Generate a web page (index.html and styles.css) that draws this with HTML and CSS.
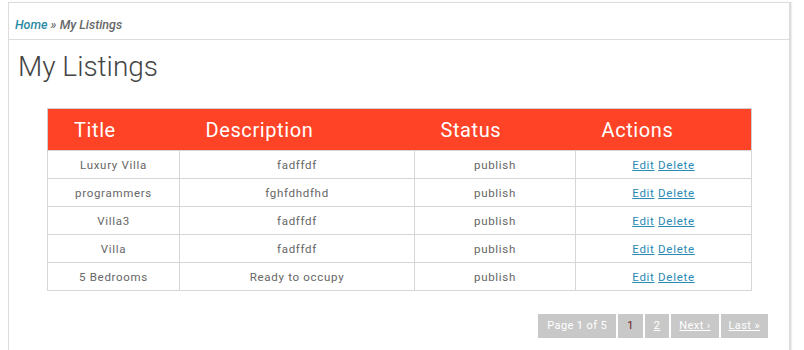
FILE: index.html
```html
<!DOCTYPE html>
<html>
<head>
<meta charset="utf-8">
<link rel="stylesheet" href="styles.css">
</head>
<body>
<div class="panel">
  <div class="crumbs"><a href="#" class="home">Home</a> » My Listings</div>
  <div class="content">
    <h1 class="title">My Listings</h1>
    <table class="listings">
      <thead>
        <tr><th class="c1">Title</th><th class="c2">Description</th><th class="c3">Status</th><th class="c4">Actions</th></tr>
      </thead>
      <tbody>
        <tr><td>Luxury Villa</td><td>fadffdf</td><td>publish</td><td><a href="#">Edit</a> <a href="#">Delete</a></td></tr>
        <tr><td>programmers</td><td>fghfdhdfhd</td><td>publish</td><td><a href="#">Edit</a> <a href="#">Delete</a></td></tr>
        <tr><td>Villa3</td><td>fadffdf</td><td>publish</td><td><a href="#">Edit</a> <a href="#">Delete</a></td></tr>
        <tr><td>Villa</td><td>fadffdf</td><td>publish</td><td><a href="#">Edit</a> <a href="#">Delete</a></td></tr>
        <tr><td>5 Bedrooms</td><td>Ready to occupy</td><td>publish</td><td><a href="#">Edit</a> <a href="#">Delete</a></td></tr>
      </tbody>
    </table>
    <div class="pager">
      <span class="pg info">Page 1 of 5</span>
      <span class="pg current">1</span>
      <a href="#" class="pg">2</a>
      <a href="#" class="pg nav">Next ›</a>
      <a href="#" class="pg nav">Last »</a>
    </div>
  </div>
</div>
</body>
</html>
```
FILE: styles.css
```css
html, body {
  margin: 0;
  padding: 0;
  background: #fff;
  font-family: Roboto, "Liberation Sans", sans-serif;
}
.panel {
  margin: 2px 13px 0 8px;
  border: 1px solid #dcdcdc;
  border-right: 2px solid #dcdcdc;
  box-shadow: 1px 0 1px #eee;
  height: 360px;
  box-sizing: border-box;
}
.crumbs {
  height: 37px;
  box-sizing: border-box;
  padding: 14px 0 0 6px;
  font-size: 12.5px;
  font-style: italic;
  font-weight: 500;
  color: #666;
  border-bottom: 1px solid #dcdcdc;
}
.crumbs .home {
  color: #2b8aa3;
  text-decoration: none;
}
.content {
  padding: 0 38px 0 9px;
}
.title {
  margin: 10px 0 0 0;
  font-size: 28px;
  font-weight: 300;
  color: #444;
  line-height: 34px;
  height: 58px;
}
.listings {
  margin-left: 29px;
  width: 705px;
  border-collapse: collapse;
  border: 1px solid #d0d0d0;
}
.listings th {
  background: #ff4326;
  color: #fff;
  font-size: 20px;
  font-weight: 400;
  letter-spacing: 0.6px;
  text-align: left;
  padding: 0 0 0 26px;
  height: 42px;
  box-sizing: border-box;
}
.listings th.c1 { width: 132px; }
.listings th.c2 { width: 235px; }
.listings th.c3 { width: 161px; }
.listings td {
  border: 1px solid #d6d6d6;
  text-align: center;
  font-size: 11.5px;
  color: #666;
  height: 27px;
  padding: 0;
  letter-spacing: 0.7px;
}
.listings td a {
  color: #2b8ab4;
}
.pager {
  display: flex;
  justify-content: flex-end;
  gap: 2px;
  margin-top: 23px;
  margin-right: -17px;
}
.pg {
  display: block;
  background: #c8c8c8;
  color: #fff;
  font-size: 11px;
  letter-spacing: 0.4px;
  height: 24px;
  line-height: 24px;
  padding: 0 9px;
}
.pg.nav { padding: 0 8px; }
.pg.current { color: #6a1a1a; }
```
